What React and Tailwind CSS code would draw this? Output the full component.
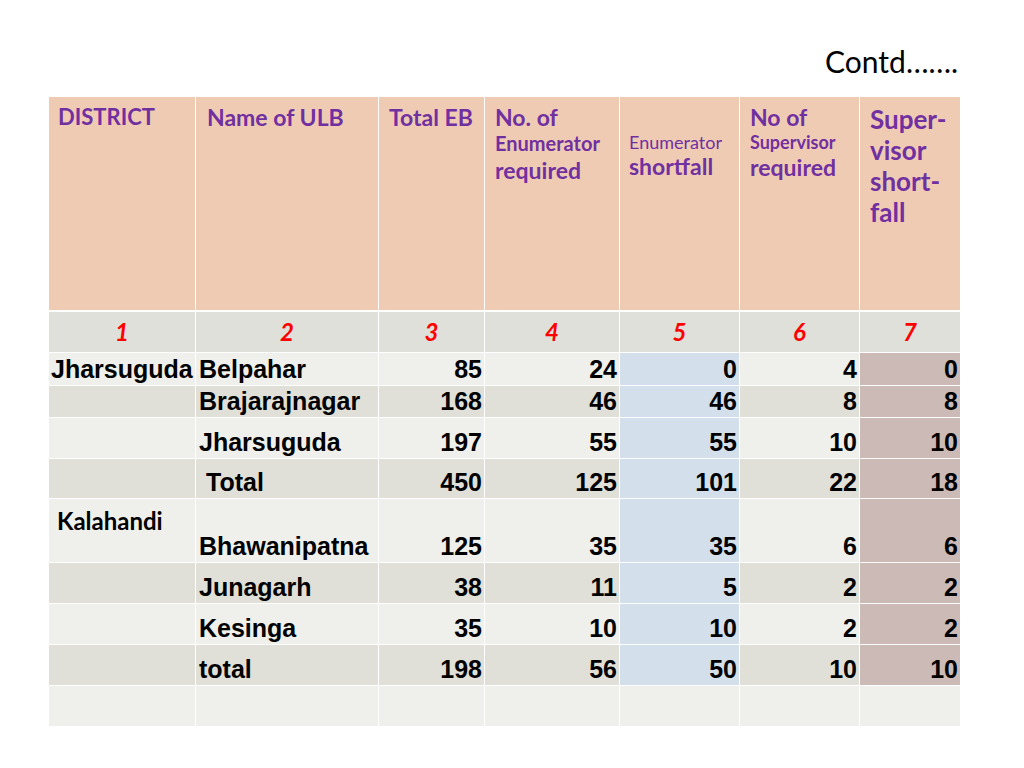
const rows = [
  { d: 'Jharsuguda', u: 'Belpahar', v: [85, 24, 0, 4, 0], h: 'h-[33px]', even: false },
  { u: 'Brajarajnagar', v: [168, 46, 46, 8, 8], h: 'h-[32px]', even: true },
  { u: 'Jharsuguda', v: [197, 55, 55, 10, 10], h: 'h-[41px]', even: false },
  { u: 'Total', v: [450, 125, 101, 22, 18], h: 'h-[40px]', even: true, indent: true },
  { k: 'Kalahandi', u: 'Bhawanipatna', v: [125, 35, 35, 6, 6], h: 'h-[64px]', even: false },
  { u: 'Junagarh', v: [38, 11, 5, 2, 2], h: 'h-[41px]', even: true },
  { u: 'Kesinga', v: [35, 10, 10, 2, 2], h: 'h-[41px]', even: false },
  { u: 'total', v: [198, 56, 50, 10, 10], h: 'h-[41px]', even: true },
]

const hd = "font-['Lato','Open_Sans',sans-serif] font-bold text-[#7030a0]"
const body = "font-['Liberation_Sans',Arial,sans-serif] font-bold text-[25px] leading-none text-black"

export default function App() {
  return (
    <div className="w-[1024px] h-[768px] bg-white relative">
      <div className="flex justify-end pr-[66px] pt-[46px] h-[96px]">
        <span className="font-['Lato','Open_Sans',sans-serif] text-[30px] leading-none text-black">Contd…….</span>
      </div>
      <table className="ml-[48px] border-collapse table-fixed w-[912px]">
        <colgroup>
          <col className="w-[147px]" />
          <col className="w-[183px]" />
          <col className="w-[106px]" />
          <col className="w-[135px]" />
          <col className="w-[120px]" />
          <col className="w-[120px]" />
          <col className="w-[101px]" />
        </colgroup>
        <thead>
          <tr className="h-[214px] bg-[#f0cbb4]">
            <th className={`${hd} text-[22px] leading-[26px] text-left align-top pl-[9px] pt-[7px] border border-white`}>DISTRICT</th>
            <th className={`${hd} text-[23px] leading-[26px] text-left align-top pl-[11px] pt-[7px] border border-white`}>Name of ULB</th>
            <th className={`${hd} text-[23px] leading-[26px] text-left align-top pl-[10px] pt-[7px] border border-white`}>Total EB</th>
            <th className={`${hd} text-left align-top pl-[10px] pt-[7px] border border-white`}>
              <div className="text-[23px] leading-[26px]">No. of</div>
              <div className="text-[20px] leading-[27px]">Enumerator</div>
              <div className="text-[23px] leading-[26px]">required</div>
            </th>
            <th className={`${hd} text-left align-top pl-[9px] pt-[34px] border border-white`}>
              <div className="text-[18px] leading-[22px] font-normal">Enumerator</div>
              <div className="text-[23px] leading-[26px]">shortfall</div>
            </th>
            <th className={`${hd} text-left align-top pl-[10px] pt-[7px] border border-white`}>
              <div className="text-[23px] leading-[26px]">No of</div>
              <div className="text-[18px] leading-[24px]">Supervisor</div>
              <div className="text-[23px] leading-[26px]">required</div>
            </th>
            <th className={`${hd} text-[26px] leading-[31px] text-left align-top pl-[10px] pt-[7px] border border-white`}>
              Super-<br />visor<br />short-<br />fall
            </th>
          </tr>
        </thead>
        <tbody>
          <tr className="h-[42px] bg-[#dfe0d9]">
            {[1, 2, 3, 4, 5, 6, 7].map((n) => (
              <td key={n} className="border border-white border-t-2 text-center font-['Lato','Open_Sans',sans-serif] font-bold italic text-[24px] text-[#ff0000]">
                {n}
              </td>
            ))}
          </tr>
          {rows.map((r, i) => {
            const bg = r.even ? 'bg-[#e0e0d8]' : 'bg-[#efefeb]'
            return (
              <tr key={i} className={`${r.h} ${bg}`}>
                <td className={`border border-white ${r.k ? 'align-top pl-[8px] pt-[10px]' : `align-bottom pl-[2px] pb-[3px] ${body}`}`}>
                  {r.d}
                  {r.k && <span className="font-['Lato','Open_Sans',sans-serif] font-bold text-[24px] leading-none text-black">{r.k}</span>}
                </td>
                <td className={`border border-white align-bottom pb-[3px] ${r.indent ? 'pl-[10px]' : 'pl-[3px]'} ${body}`}>{r.u}</td>
                {r.v.map((n, j) => (
                  <td
                    key={j}
                    className={`border border-white align-bottom text-right pr-[2px] pb-[3px] ${body} ${j === 2 ? 'bg-[#d3e0ec]' : ''} ${j === 4 ? 'bg-[#cbbab6]' : ''}`}
                  >
                    {n}
                  </td>
                ))}
              </tr>
            )
          })}
          <tr className="h-[41px] bg-[#efefeb]">
            {[1, 2, 3, 4, 5, 6, 7].map((n) => (
              <td key={n} className="border border-white" />
            ))}
          </tr>
        </tbody>
      </table>
    </div>
  )
}
